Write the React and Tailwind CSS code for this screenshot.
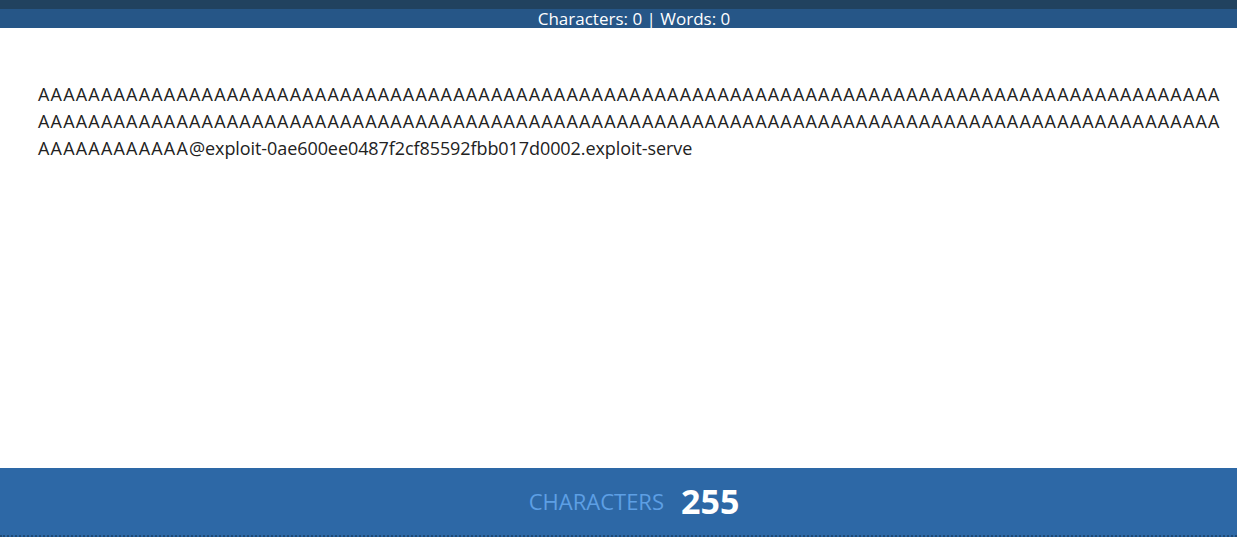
export default function App() {
  const aLine = "A".repeat(94);
  return (
    <div className="flex h-[537px] w-full flex-col bg-white font-['Open_Sans',sans-serif]">
      <div className="h-[9px] bg-[#21425f]" />
      <div className="flex h-[19px] items-center justify-center bg-[#265687] pl-[31px] text-[17px] leading-none text-white">
        Characters: 0 | Words: 0
      </div>
      <div className="flex-1 px-[38px] pt-[53px] text-[18px] leading-[27px] text-[#222]">
        <div className="whitespace-nowrap tracking-[1.2px]">{aLine}</div>
        <div className="whitespace-nowrap tracking-[1.2px]">{aLine}</div>
        <div className="whitespace-nowrap">
          <span className="tracking-[1.2px]">{"A".repeat(12)}</span>
          <span className="tracking-[-0.08px]">@exploit-0ae600ee0487f2cf85592fbb017d0002.exploit-serve</span>
        </div>
      </div>
      <div className="flex h-[69px] items-center justify-center gap-[17px] border-b-2 border-dotted border-[#1f4a75] bg-[#2d68a6] pl-[31px]">
        <span className="text-[22px] text-[#5d9fe4]">CHARACTERS</span>
        <span className="text-[34px] font-bold text-white">255</span>
      </div>
    </div>
  );
}
